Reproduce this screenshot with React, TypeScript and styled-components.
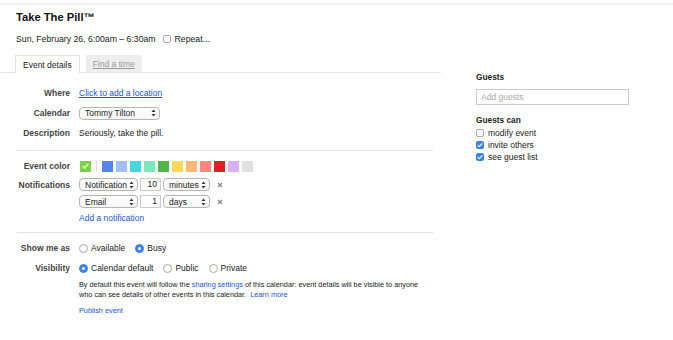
import React from "react";
import styled, { createGlobalStyle } from "styled-components";

const GlobalStyle = createGlobalStyle`
  body {
    margin: 0;
    background: #fff;
    color: #222;
    font-family: "Liberation Sans", Arial, sans-serif;
  }
`;

const Page = styled.div`
  width: 673px;
  height: 340px;
  overflow: hidden;
`;

const TopRule = styled.div`
  margin-top: 3px;
  border-top: 2px solid #f4f4f4;
`;

const Columns = styled.div`
  display: flex;
`;

const Main = styled.div`
  width: 441px;
  padding-left: 15px;
  box-sizing: border-box;
`;

const Title = styled.div`
  margin: 5px 0 0 1px;
  font-size: 11.2px;
  line-height: 14px;
  font-weight: bold;
  color: #111;
`;

const DateLine = styled.div`
  display: flex;
  align-items: center;
  height: 12px;
  margin: 9px 0 0 1px;
  font-size: 8.7px;
  gap: 4px;
`;

const Tabs = styled.div`
  display: flex;
  gap: 6px;
  margin: 10px 0 0 -15px;
  padding-left: 15px;
  border-bottom: 1px solid #e6e6e6;
`;

const Tab = styled.div<{ $active?: boolean }>`
  display: flex;
  align-items: center;
  height: 17px;
  padding: 0 7px;
  font-size: 8.5px;
  box-sizing: border-box;
  ${(p) =>
    p.$active
      ? `
    background: #fff;
    border: 1px solid #e2e2e2;
    border-bottom: none;
    margin-bottom: -1px;
    height: 18px;
    color: #222;
  `
      : `
    background: #eee;
    color: #999;
    text-decoration: underline;
  `}
`;

const Form = styled.div`
  padding-top: 10px;
`;

const Row = styled.div<{ $h: number }>`
  display: grid;
  grid-template-columns: 55px auto;
  column-gap: 9px;
  align-items: center;
  height: ${(p) => p.$h}px;
`;

const Label = styled.div`
  text-align: right;
  font-size: 8.5px;
  font-weight: bold;
  color: #444;
  white-space: nowrap;
`;

const Value = styled.div`
  display: flex;
  align-items: center;
  font-size: 8.5px;
`;

const Link = styled.a<{ $underline?: boolean }>`
  color: #1a56cf;
  text-decoration: ${(p) => (p.$underline ? "underline" : "none")};
  cursor: pointer;
`;

const Divider = styled.div<{ $top: number }>`
  width: 416px;
  height: 1px;
  margin: ${(p) => p.$top}px 0 0 2px;
  background: #e3e3e3;
`;

const SelectBox = styled.div<{ $w: number }>`
  display: flex;
  align-items: center;
  justify-content: space-between;
  width: ${(p) => p.$w}px;
  height: 13px;
  box-sizing: border-box;
  padding: 0 3px 0 5px;
  border: 1px solid #b5b5b5;
  border-radius: 4px;
  background: linear-gradient(#fff, #f6f6f6);
  font-size: 8.5px;
  color: #222;
  white-space: nowrap;
`;

const NumberBox = styled.div`
  width: 21px;
  height: 13px;
  box-sizing: border-box;
  padding-right: 3px;
  border: 1px solid #ccc;
  font-size: 8.5px;
  line-height: 11px;
  text-align: right;
`;

const Controls = styled.div`
  display: flex;
  align-items: center;
  gap: 2px;
`;

const Remove = styled.span`
  display: flex;
  margin-left: 5px;
`;

const Swatches = styled.div`
  display: flex;
  align-items: center;
  gap: 3px;
  margin-left: 1px;
`;

const Swatch = styled.div<{ $color: string }>`
  display: flex;
  align-items: center;
  justify-content: center;
  width: 11px;
  height: 11px;
  background: ${(p) => p.$color};
`;

const SwatchRule = styled.div`
  width: 1px;
  height: 11px;
  margin: 0 2px;
  background: #ddd;
`;

const Options = styled.div`
  display: flex;
  align-items: center;
  gap: 10px;
`;

const Option = styled.label`
  display: flex;
  align-items: center;
  gap: 3px;
  font-size: 8.5px;
`;

const Radio = styled.span<{ $on?: boolean }>`
  display: flex;
  align-items: center;
  justify-content: center;
  width: 9px;
  height: 9px;
  box-sizing: border-box;
  border-radius: 50%;
  border: 1px solid ${(p) => (p.$on ? "#3a83e8" : "#aaa")};
  background: ${(p) => (p.$on ? "#3a83e8" : "#fff")};
  &::after {
    content: "";
    display: ${(p) => (p.$on ? "block" : "none")};
    width: 3px;
    height: 3px;
    border-radius: 50%;
    background: #fff;
  }
`;

const Box = styled.span<{ $on?: boolean }>`
  display: flex;
  align-items: center;
  justify-content: center;
  width: 8px;
  height: 8px;
  box-sizing: border-box;
  border-radius: 2px;
  border: 1px solid ${(p) => (p.$on ? "#3a83e8" : "#aaa")};
  background: ${(p) => (p.$on ? "#3a83e8" : "#fff")};
`;

const Note = styled.div`
  margin-top: 2px;
  font-size: 7.3px;
  line-height: 10px;
  color: #222;
  white-space: nowrap;
`;

const Publish = styled.div`
  margin-top: 6px;
  font-size: 7.3px;
  line-height: 10px;
`;

const Side = styled.div`
  padding: 67px 0 0 35px;
`;

const SideTitle = styled.div`
  font-size: 8.3px;
  line-height: 10px;
  font-weight: bold;
  color: #222;
`;

const GuestInput = styled.div`
  width: 153px;
  height: 16px;
  margin-top: 7px;
  box-sizing: border-box;
  padding-left: 4px;
  border: 1px solid #ccc;
  font-size: 8.5px;
  line-height: 14px;
  color: #aaa;
`;

const CheckList = styled.div`
  margin-top: 2px;
`;

const CheckRow = styled.label`
  display: flex;
  align-items: center;
  gap: 4px;
  height: 12px;
  font-size: 8.5px;
`;

function Arrows() {
  return (
    <svg width="5" height="8" viewBox="0 0 5 8">
      <path d="M2.5 0.5 L4.5 3 L0.5 3 Z" fill="#333" />
      <path d="M0.5 5 L4.5 5 L2.5 7.5 Z" fill="#333" />
    </svg>
  );
}

function Tick({ color = "#fff" }: { color?: string }) {
  return (
    <svg width="7" height="6" viewBox="0 0 7 6">
      <path d="M0.8 3.2 L2.7 5 L6.2 1" stroke={color} strokeWidth="1.3" fill="none" />
    </svg>
  );
}

function Cross() {
  return (
    <svg width="6" height="6" viewBox="0 0 6 6">
      <path d="M1 1 L5 5 M5 1 L1 5" stroke="#8a8a8a" strokeWidth="1.4" />
    </svg>
  );
}

function Select({ w, children }: { w: number; children: React.ReactNode }) {
  return (
    <SelectBox $w={w}>
      <span>{children}</span>
      <Arrows />
    </SelectBox>
  );
}

const colors = [
  "#5484ed",
  "#a4bdfc",
  "#46d6db",
  "#7ae7bf",
  "#51b749",
  "#fbd75b",
  "#ffb878",
  "#ff887c",
  "#dc2127",
  "#dbadff",
  "#e1e1e1",
];

const guestRights = [
  { label: "modify event", on: false },
  { label: "invite others", on: true },
  { label: "see guest list", on: true },
];

export default function App() {
  return (
    <Page>
      <GlobalStyle />
      <TopRule />
      <Columns>
        <Main>
          <Title>Take The Pill™</Title>
          <DateLine>
            <span>Sun, February 26, 6:00am – 6:30am</span>
            <Box style={{ marginLeft: 3 }} />
            <span>Repeat...</span>
          </DateLine>
          <Tabs>
            <Tab $active>Event details</Tab>
            <Tab>Find a time</Tab>
          </Tabs>

          <Form>
            <Row $h={20}>
              <Label>Where</Label>
              <Value>
                <Link $underline>Click to add a location</Link>
              </Value>
            </Row>
            <Row $h={20}>
              <Label>Calendar</Label>
              <Value>
                <Select w={81}>Tommy Tilton</Select>
              </Value>
            </Row>
            <Row $h={20}>
              <Label>Description</Label>
              <Value>Seriously, take the pill.</Value>
            </Row>

            <Divider $top={7} />

            <Row $h={20} style={{ marginTop: 5 }}>
              <Label>Event color</Label>
              <Swatches>
                <Swatch $color="#7bd148">
                  <Tick />
                </Swatch>
                <SwatchRule />
                {colors.map((c) => (
                  <Swatch key={c} $color={c} />
                ))}
              </Swatches>
            </Row>
            <Row $h={17}>
              <Label>Notifications</Label>
              <Controls>
                <Select w={59}>Notification</Select>
                <NumberBox>10</NumberBox>
                <Select w={47}>minutes</Select>
                <Remove>
                  <Cross />
                </Remove>
              </Controls>
            </Row>
            <Row $h={17}>
              <Label />
              <Controls>
                <Select w={59}>Email</Select>
                <NumberBox>1</NumberBox>
                <Select w={47}>days</Select>
                <Remove>
                  <Cross />
                </Remove>
              </Controls>
            </Row>
            <Row $h={16}>
              <Label />
              <Value>
                <Link>Add a notification</Link>
              </Value>
            </Row>

            <Divider $top={6} />

            <Row $h={20} style={{ marginTop: 5 }}>
              <Label>Show me as</Label>
              <Options>
                <Option>
                  <Radio />
                  Available
                </Option>
                <Option>
                  <Radio $on />
                  Busy
                </Option>
              </Options>
            </Row>
            <Row $h={20}>
              <Label>Visibility</Label>
              <Options>
                <Option>
                  <Radio $on />
                  Calendar default
                </Option>
                <Option>
                  <Radio />
                  Public
                </Option>
                <Option>
                  <Radio />
                  Private
                </Option>
              </Options>
            </Row>
            <Row $h={0} style={{ height: "auto", alignItems: "start" }}>
              <Label />
              <div>
                <Note>
                  By default this event will follow the <Link>sharing settings</Link> of this
                  calendar: event details will be visible to anyone
                  <br />
                  who can see details of other events in this calendar.&nbsp; <Link>Learn more</Link>
                </Note>
                <Publish>
                  <Link>Publish event</Link>
                </Publish>
              </div>
            </Row>
          </Form>
        </Main>

        <Side>
          <SideTitle>Guests</SideTitle>
          <GuestInput>Add guests</GuestInput>
          <SideTitle style={{ marginTop: 10 }}>Guests can</SideTitle>
          <CheckList>
            {guestRights.map((r) => (
              <CheckRow key={r.label}>
                <Box $on={r.on}>{r.on && <Tick />}</Box>
                {r.label}
              </CheckRow>
            ))}
          </CheckList>
        </Side>
      </Columns>
    </Page>
  );
}
